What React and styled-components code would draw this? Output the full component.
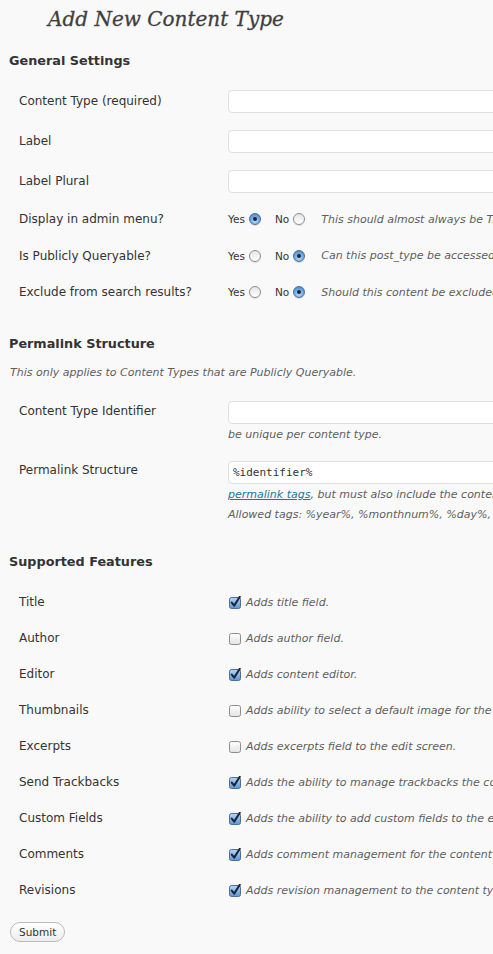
import React from "react";
import styled, { createGlobalStyle } from "styled-components";

const GlobalStyle = createGlobalStyle`
  html, body {
    margin: 0;
    padding: 0;
    background: #f9f9f9;
    overflow: hidden;
  }
  body {
    font-family: "DejaVu Sans", "Liberation Sans", sans-serif;
    font-size: 12px;
    color: #333;
  }
`;

const Page = styled.div`
  width: 493px;
  height: 954px;
  overflow: hidden;
  padding-left: 9px;
  box-sizing: border-box;
  white-space: nowrap;
`;

const Title = styled.h2`
  margin: 0;
  padding: 2px 0 0 39px;
  height: 36px;
  box-sizing: border-box;
  font-family: "DejaVu Serif", "Liberation Serif", serif;
  font-style: italic;
  font-weight: normal;
  font-size: 20px;
  line-height: 34px;
  color: #3f3f3f;
  -webkit-text-stroke: 0.3px #3f3f3f;
`;

const SectionTitle = styled.h3`
  margin: ${(p) => p.$top}px 0 0;
  font-size: 12.8px;
  font-weight: bold;
  line-height: 20px;
  color: #333;
`;

const Intro = styled.p`
  margin: 11px 0 0 1px;
  font-size: 11px;
  font-style: italic;
  line-height: 16px;
  color: #5e5e5e;
`;

const Table = styled.div`
  margin-top: ${(p) => p.$top}px;
  display: flex;
  flex-direction: column;
`;

const Row = styled.div`
  display: grid;
  grid-template-columns: 219px 1fr;
  align-items: ${(p) => (p.$top ? "start" : "center")};
  height: ${(p) => (p.$h ? `${p.$h}px` : "auto")};
  padding: ${(p) => (p.$top ? "10px 0 7px" : "0")};
`;

const Label = styled.div`
  padding-left: 10px;
  font-size: 12px;
  line-height: ${(p) => p.$lh || 22}px;
  color: #333;
`;

const Control = styled.div`
  display: flex;
  flex-direction: column;
  min-width: 0;
`;

const TextField = styled.input`
  width: 330px;
  height: 23px;
  box-sizing: border-box;
  margin: 0;
  padding: 0 4px;
  border: 1px solid #dfdfdf;
  border-radius: 4px;
  background: #fff;
  font-family: "DejaVu Sans Mono", "Liberation Mono", monospace;
  font-size: 11px;
  color: #333;
  outline: none;
`;

const Note = styled.div`
  margin-top: 1px;
  font-size: 11px;
  font-style: italic;
  line-height: 19px;
  color: #5e5e5e;
`;

const Link = styled.a`
  color: #21759b;
  text-decoration: underline;
`;

const Choices = styled.div`
  display: flex;
  align-items: center;
`;

const Choice = styled.span`
  display: inline-flex;
  align-items: center;
  gap: 4px;
  margin-right: ${(p) => p.$gap}px;
  font-size: 10.5px;
  color: #333;
`;

const Radio = styled.span`
  display: inline-block;
  position: relative;
  width: 12px;
  height: 12px;
  border-radius: 50%;
  box-sizing: border-box;
  border: 1px solid ${(p) => (p.$on ? "#4d6f97" : "#8d8d8d")};
  background: ${(p) =>
    p.$on
      ? "radial-gradient(circle at 50% 70%, #b8dcfa 0%, #6aa6e0 55%, #3c78c0 100%)"
      : "linear-gradient(#e6e6e6, #ffffff)"};
  box-shadow: 0 1px 1px rgba(0, 0, 0, 0.12);

  &::after {
    content: "";
    display: ${(p) => (p.$on ? "block" : "none")};
    position: absolute;
    left: 3px;
    top: 3px;
    width: 4px;
    height: 4px;
    border-radius: 50%;
    background: #1d2434;
  }
`;

const Hint = styled.span`
  font-size: 11px;
  font-style: italic;
  color: #5e5e5e;
`;

const Feature = styled.div`
  display: flex;
  align-items: center;
  gap: 4px;
  padding-left: 1px;
`;

const SubmitButton = styled.button`
  margin: 14px 0 0 1px;
  height: 20px;
  padding: 0 8px;
  border: 1px solid #bbb;
  border-radius: 11px;
  background: linear-gradient(#ffffff, #ededed);
  font-family: "DejaVu Sans", "Liberation Sans", sans-serif;
  font-size: 10.5px;
  color: #333;
  cursor: pointer;
`;

function Checkbox({ on }) {
  return (
    <svg width="13" height="13" viewBox="0 0 13 13">
      <defs>
        <linearGradient id={on ? "cbOn" : "cbOff"} x1="0" y1="0" x2="0" y2="1">
          <stop offset="0" stopColor={on ? "#b5d6f5" : "#ffffff"} />
          <stop offset="1" stopColor={on ? "#5c96d6" : "#e2e2e2"} />
        </linearGradient>
      </defs>
      <rect
        x="0.5"
        y="1.5"
        width="11"
        height="11"
        rx="2"
        fill={`url(#${on ? "cbOn" : "cbOff"})`}
        stroke={on ? "#4d6f97" : "#8d8d8d"}
      />
      {on && (
        <path
          d="M2.8 6.6 L5.2 9.6 L10.8 0.8"
          fill="none"
          stroke="#1d2434"
          strokeWidth="2"
          strokeLinecap="round"
          strokeLinejoin="round"
        />
      )}
    </svg>
  );
}

const generalInputs = ["Content Type (required)", "Label", "Label Plural"];

const generalChoices = [
  {
    label: "Display in admin menu?",
    yes: true,
    hint: "This should almost always be True.",
    h: 36,
  },
  {
    label: "Is Publicly Queryable?",
    yes: false,
    hint: "Can this post_type be accessed from the front end?",
    h: 37,
  },
  {
    label: "Exclude from search results?",
    yes: false,
    hint: "Should this content be excluded from search results?",
    h: 36,
  },
];

const features = [
  ["Title", true, "Adds title field."],
  ["Author", false, "Adds author field."],
  ["Editor", true, "Adds content editor."],
  ["Thumbnails", false, "Adds ability to select a default image for the post."],
  ["Excerpts", false, "Adds excerpts field to the edit screen."],
  ["Send Trackbacks", true, "Adds the ability to manage trackbacks the content type."],
  ["Custom Fields", true, "Adds the ability to add custom fields to the edit screen."],
  ["Comments", true, "Adds comment management for the content type."],
  ["Revisions", true, "Adds revision management to the content type."],
];

export default function App() {
  return (
    <>
      <GlobalStyle />
      <Page>
        <Title>Add New Content Type</Title>

        <SectionTitle $top={15}>General Settings</SectionTitle>
        <Table $top={10}>
          {generalInputs.map((label) => (
            <Row key={label} $h={40}>
              <Label>{label}</Label>
              <Control>
                <TextField type="text" />
              </Control>
            </Row>
          ))}
          {generalChoices.map((c) => (
            <Row key={c.label} $h={c.h}>
              <Label>{c.label}</Label>
              <Choices>
                <Choice $gap={14}>
                  Yes <Radio $on={c.yes} />
                </Choice>
                <Choice $gap={16}>
                  No <Radio $on={!c.yes} />
                </Choice>
                <Hint>{c.hint}</Hint>
              </Choices>
            </Row>
          ))}
        </Table>

        <SectionTitle $top={24}>Permalink Structure</SectionTitle>
        <Intro>This only applies to Content Types that are Publicly Queryable.</Intro>
        <Table $top={10}>
          <Row $top>
            <Label $lh={20}>Content Type Identifier</Label>
            <Control>
              <TextField type="text" />
              <Note>be unique per content type.</Note>
            </Control>
          </Row>
          <Row $top>
            <Label $lh={18}>Permalink Structure</Label>
            <Control>
              <TextField type="text" defaultValue="%identifier%" />
              <Note>
                <Link href="#">permalink tags</Link>, but must also include the content type identifier.
              </Note>
              <Note>Allowed tags: %year%, %monthnum%, %day%, %hour%, %minute%, %second%</Note>
            </Control>
          </Row>
        </Table>

        <SectionTitle $top={21}>Supported Features</SectionTitle>
        <Table $top={12}>
          {features.map(([label, on, hint]) => (
            <Row key={label} $h={36}>
              <Label>{label}</Label>
              <Feature>
                <Checkbox on={on} />
                <Hint>{hint}</Hint>
              </Feature>
            </Row>
          ))}
        </Table>

        <SubmitButton type="button">Submit</SubmitButton>
      </Page>
    </>
  );
}
